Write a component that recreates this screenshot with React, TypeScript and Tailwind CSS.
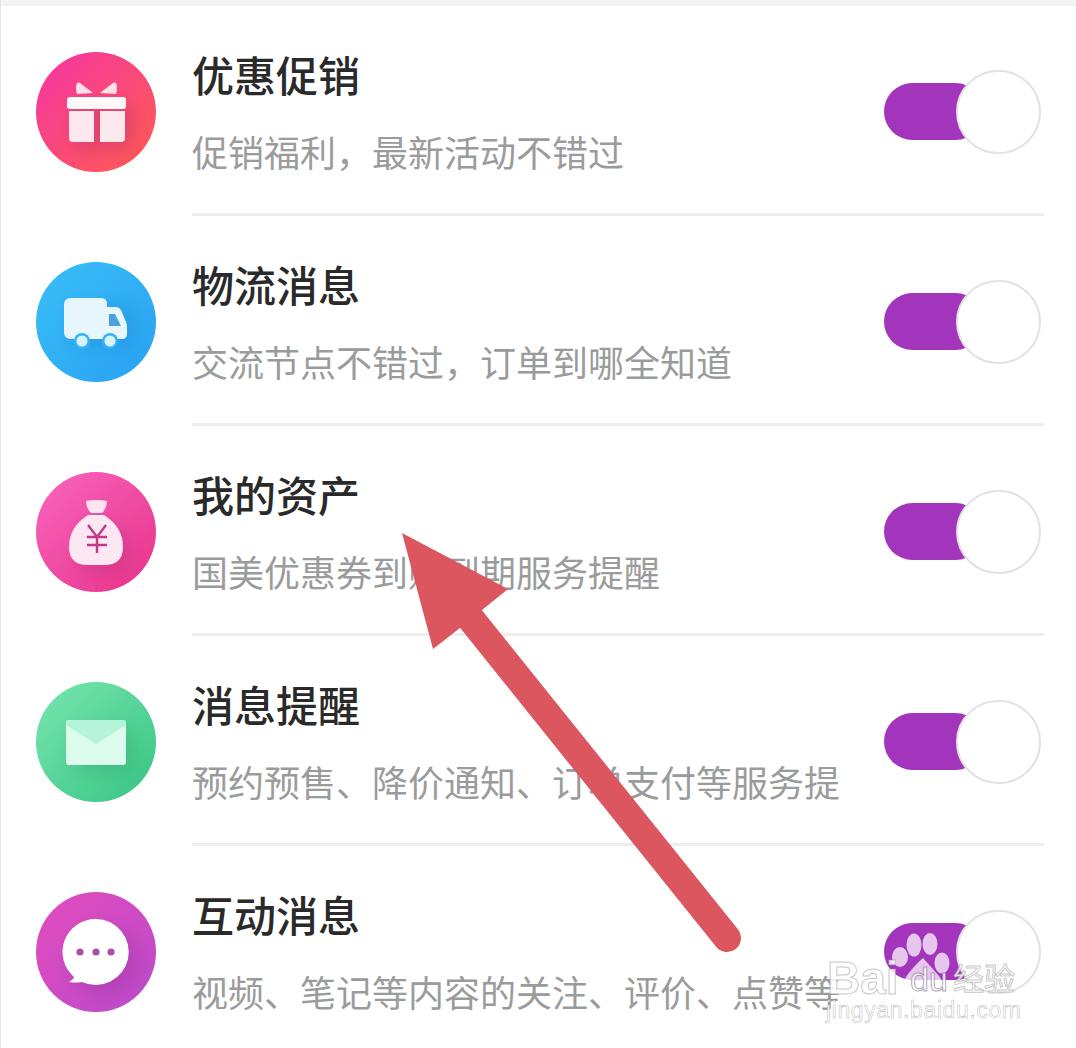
import React from 'react';

const CircleIcon = ({ id, from, to, children, shade }: { id: string; from: string; to: string; children: React.ReactNode; shade: React.ReactNode }) => {
  return <svg width="120" height="120" viewBox="0 0 120 120" className="block">
      <defs>
        <linearGradient id={`${id}-bg`} x1="0" y1="0" x2="1" y2="1">
          <stop offset="0.1" stopColor={from} />
          <stop offset="0.9" stopColor={to} />
        </linearGradient>
        <clipPath id={`${id}-clip`}>
          <circle cx="60" cy="60" r="60" />
        </clipPath>
        <filter id={`${id}-blur`} x="-40%" y="-40%" width="180%" height="180%">
          <feGaussianBlur stdDeviation="8" />
        </filter>
      </defs>
      <circle cx="60" cy="60" r="60" fill={`url(#${id}-bg)`} />
      <g clipPath={`url(#${id}-clip)`}>
        <g filter={`url(#${id}-blur)`} opacity="0.18" fill="#7a1f5a" transform="translate(7 8)">
          {shade}
        </g>
      </g>
      {children}
    </svg>;
};

const GiftIcon = () => {
  const shape = <rect x="31" y="45" width="59" height="45" rx="3" />;
  return <CircleIcon id="gift" from="#f53a9c" to="#ff5858" shade={shape}>
      <path d="M41 31 Q42 30 44 31 L57 41 L41 42 Q39 36 41 31 Z" fill="#ffdfe8" />
      <path d="M80 31 Q79 30 77 31 L64 41 L80 42 Q82 36 80 31 Z" fill="#ffdfe8" />
      <rect x="31" y="45" width="59" height="12" rx="3" fill="#fff8f9" />
      <path d="M33 59 H58 V90 H37 Q33 90 33 86 Z" fill="#fde8ee" />
      <path d="M64 59 H89 V86 Q89 90 85 90 H64 Z" fill="#fde8ee" />
    </CircleIcon>;
};

const TruckIcon = () => {
  return <CircleIcon id="truck" from="#38bcf8" to="#2aa4f2" shade={<rect x="28" y="36" width="63" height="42" rx="6" fill="#0b5fa8" />}>
      <path d="M35 36 H65 Q71 36 71 42 V45 H80 Q83 45 85 48 L90 60 Q91 62 91 65 V72 Q91 77 86 77 H35 Q28 77 28 70 V43 Q28 36 35 36 Z" fill="#e6f6fc" />
      <path d="M73 52 H79 L85 64 H73 Z" fill="#4aa3e0" />
      <circle cx="46" cy="79" r="8" fill="#38b2f4" />
      <circle cx="74" cy="79" r="8" fill="#38b2f4" />
      <circle cx="46" cy="79" r="5.5" fill="#d8f3fd" />
      <circle cx="74" cy="79" r="5.5" fill="#d8f3fd" />
    </CircleIcon>;
};

const BagIcon = () => {
  const body = <path d="M52 43 H68 Q87 55 87 75 Q87 93 68 93 H52 Q33 93 33 75 Q33 55 52 43 Z" />;
  return <CircleIcon id="bag" from="#f860b8" to="#e9388f" shade={body}>
      <path d="M50 29 Q60 27 71 29 Q71 36 66 41 H55 Q50 36 50 29 Z" fill="#fde3f0" />
      <path d="M52 43 H68 Q87 55 87 75 Q87 93 68 93 H52 Q33 93 33 75 Q33 55 52 43 Z" fill="#fde7f2" />
      <path d="M52 53 L61 65 L70 53 M51 65 H71 M51 73 H71 M61 65 V81" stroke="#c23a86" strokeWidth="2.4" fill="none" />
    </CircleIcon>;
};

const MailIcon = () => {
  return <CircleIcon id="mail" from="#72e2ab" to="#3ec888" shade={<rect x="30" y="38" width="60" height="45" rx="3" fill="#0f7a4c" />}>
      <rect x="30" y="38" width="60" height="45" rx="3" fill="#dcfcee" />
      <path d="M33 38 H87 Q90 38 90 41 V43 L60 62 L30 43 V41 Q30 38 33 38 Z" fill="#b4f4da" />
    </CircleIcon>;
};

const ChatIcon = () => {
  return <CircleIcon id="chat" from="#e04cc0" to="#bd4ac8" shade={<circle cx="60" cy="60" r="33" fill="#5a1470" />}>
      <path d="M60 27 A33 33 0 1 1 46 90 Q40 91 33 90 Q38 87 38 85 A33 33 0 0 1 60 27 Z" fill="#ffffff" />
      <circle cx="44" cy="60" r="3.6" fill="#a94fa9" />
      <circle cx="60" cy="60" r="3.6" fill="#a94fa9" />
      <circle cx="75" cy="60" r="3.6" fill="#a94fa9" />
    </CircleIcon>;
};

const Toggle = () => {
  return <div className="relative w-[157px] h-[84px] flex-shrink-0">
      <div className="absolute left-0 top-[13px] w-[100px] h-[57px] rounded-full bg-[#a335bd]" />
      <div className="absolute right-0 top-0 w-[85px] h-[84px] rounded-full bg-white border-2 border-[#e2e2e2]" />
    </div>;
};

const rows = [{
  title: '优惠促销',
  desc: '促销福利，最新活动不错过',
  icon: <GiftIcon />
}, {
  title: '物流消息',
  desc: '交流节点不错过，订单到哪全知道',
  icon: <TruckIcon />
}, {
  title: '我的资产',
  desc: '国美优惠券到账到期服务提醒',
  icon: <BagIcon />
}, {
  title: '消息提醒',
  desc: '预约预售、降价通知、订单支付等服务提',
  icon: <MailIcon />
}, {
  title: '互动消息',
  desc: '视频、笔记等内容的关注、评价、点赞等',
  icon: <ChatIcon />
}];

const App = () => {
  return <div className="relative w-[1076px] h-[1048px] overflow-hidden bg-white border-l border-l-[#e4e4e4] font-['Noto_Sans_CJK_SC','Liberation_Sans',sans-serif]">
      <div className="h-[6px] bg-[#f3f3f3]" />
      {rows.map(row => <div key={row.title} className="flex h-[210px] pl-[35px]">
          <div className="mt-[46px] flex-shrink-0">{row.icon}</div>
          <div className="ml-9 w-[852px] h-[210px] border-b-[3px] border-[#eeeeee] flex justify-between">
            <div className="w-[648px]">
              <h2 className="mt-[43px] text-[42px] leading-[50px] font-medium text-[#2a2a2a] whitespace-nowrap">{row.title}</h2>
              <p className="mt-[27px] text-[36px] leading-[50px] text-[#9a9c9c] whitespace-nowrap">{row.desc}</p>
            </div>
            <div className="mt-[64px] mr-[3px]">
              <Toggle />
            </div>
          </div>
        </div>)}

      {/* Annotation arrow drawn over the screenshot */}
      <svg className="absolute left-[-1px] top-0 pointer-events-none" width="1076" height="1048" viewBox="0 0 1076 1048">
        <path d="M402 533 L508 589 L482 610 L460 628 L433 649 Z" fill="#dc5660" />
        <line x1="471" y1="619" x2="727" y2="938" stroke="#dc5660" strokeWidth="28" strokeLinecap="round" />
      </svg>

      {/* Baidu watermark */}
      <div className="absolute left-[825px] top-[930px] w-[200px] h-[95px] pointer-events-none">
        <svg className="absolute left-0 top-0" width="200" height="95" viewBox="0 0 200 95">
          <g fill="#ffffff" fillOpacity="0.72">
            <ellipse cx="74" cy="27" rx="8" ry="10" />
            <ellipse cx="88" cy="15" rx="7.5" ry="11.5" />
            <ellipse cx="104" cy="14" rx="7.5" ry="11" />
            <ellipse cx="116" cy="33" rx="7.5" ry="10.5" />
            <path d="M97 28 Q106 38 113 46 Q122 58 108 62 Q97 60 84 62 Q72 58 82 44 Q90 34 97 28 Z" />
          </g>
        </svg>
        <span className="absolute left-[1px] top-[28px] font-['Liberation_Sans'] font-bold text-[46px] leading-[40px] text-white/85 [-webkit-text-stroke:1px_rgba(150,150,150,0.55)]">Bai</span>
        <span className="absolute left-[84px] top-[34px] font-['Liberation_Sans'] text-[34px] leading-[30px] text-white/85 [-webkit-text-stroke:1px_rgba(120,100,130,0.6)]">du</span>
        <span className="absolute left-[127px] top-[29px] text-[31px] leading-[36px] text-white/85 [-webkit-text-stroke:1px_rgba(150,150,150,0.55)]">经验</span>
        <span className="absolute left-0 top-[69px] font-['Liberation_Sans'] text-[23px] leading-[22px] tracking-[0.6px] text-white/85 [-webkit-text-stroke:0.6px_rgba(150,150,150,0.6)]">jingyan.baidu.com</span>
      </div>
    </div>;
};

export default App;
